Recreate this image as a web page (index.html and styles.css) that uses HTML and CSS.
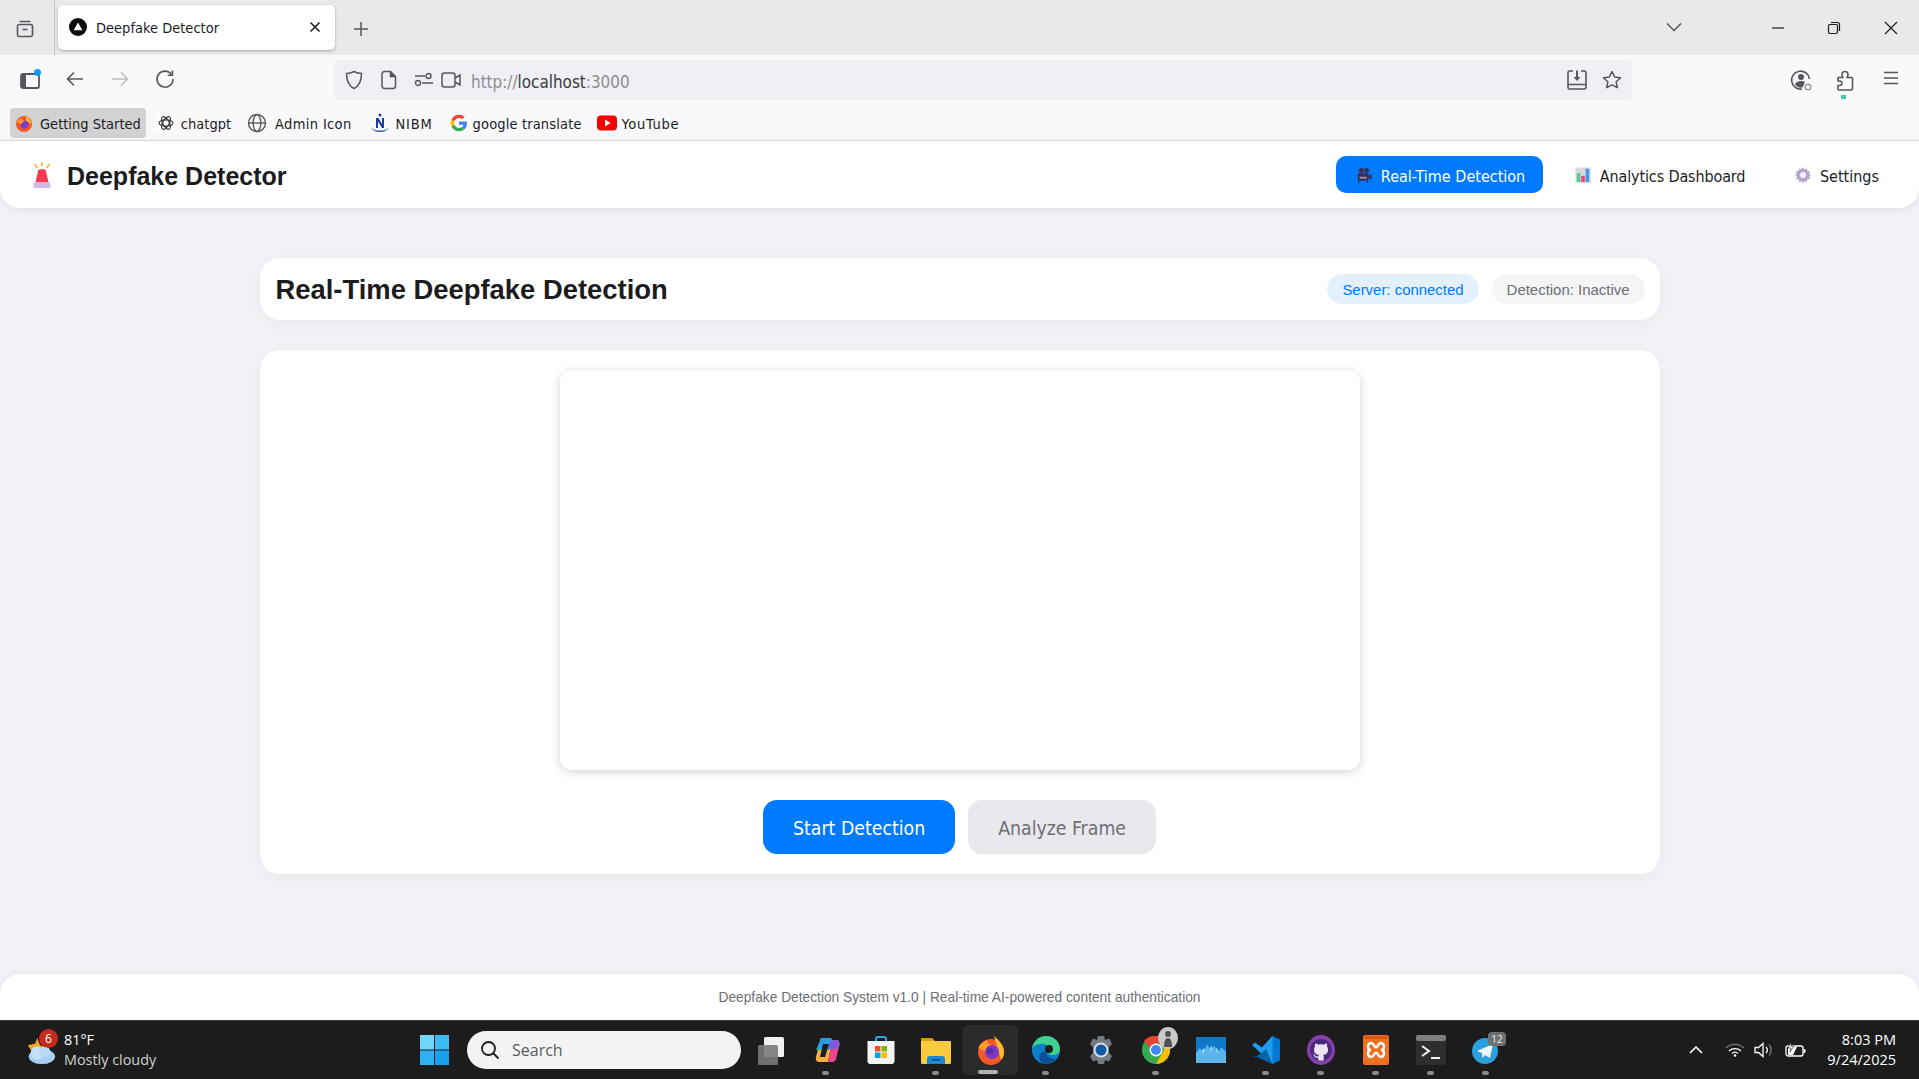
FILE: index.html
```html
<!DOCTYPE html>
<html lang="en">
<head>
<meta charset="utf-8">
<title>Deepfake Detector</title>
<link rel="stylesheet" href="styles.css">
</head>
<body>
<div class="tabstrip">
  <div class="tab-side">
    <svg class="ic20" viewBox="0 0 20 20" fill="none" stroke="#56565c" stroke-width="1.6"><rect x="2.5" y="5.5" width="15" height="12" rx="2"/><path d="M4.5 2.5h11M7.5 10.5h5"/></svg>
  </div>
  <div class="tab">
    <svg class="ic18" viewBox="0 0 18 18"><circle cx="9" cy="9" r="9" fill="#0b0b0d"/><path d="M9 4.6l4.4 7.6H4.6z" fill="#fff"/></svg>
    <span class="tab-title">Deepfake Detector</span>
    <svg class="tab-close" viewBox="0 0 12 12" stroke="#1c1c20" stroke-width="1.5"><path d="M1.5 1.5l9 9M10.500 1.500l-9 9"/></svg>
  </div>
  <div class="tab-new">
    <svg class="ic18" viewBox="0 0 18 18" stroke="#56565c" stroke-width="1.5"><path d="M9 2v14M2 9h14"/></svg>
  </div>
  <div class="tab-fill"></div>
  <svg class="tab-all" viewBox="0 0 16 10" fill="none" stroke="#56565c" stroke-width="1.5"><path d="M1 1.500l7 7 7-7"/></svg>
  <div class="win-ctrl">
    <svg class="ic14" viewBox="0 0 14 14" stroke="#1c1c20" stroke-width="1.200"><path d="M1 7h12"/></svg>
  </div>
  <div class="win-ctrl">
    <svg class="ic14" viewBox="0 0 14 14" fill="none" stroke="#1c1c20" stroke-width="1.200"><rect x="1.500" y="3.500" width="9" height="9" rx="1.500"/><path d="M4 1.500h6.500a2 2 0 0 1 2 2V10"/></svg>
  </div>
  <div class="win-ctrl">
    <svg class="ic14" viewBox="0 0 14 14" stroke="#1c1c20" stroke-width="1.200"><path d="M1 1l12 12M13 1L1 13"/></svg>
  </div>
</div>

<div class="toolbar">
  <div class="nav-row">
    <div class="tb-left">
      <div class="tb-btn">
        <svg class="ic22" viewBox="0 0 22 22"><rect x="2" y="5" width="18" height="14" rx="2" fill="none" stroke="#56565c" stroke-width="1.800"/><rect x="2" y="5" width="5" height="14" rx="2" fill="#56565c"/><circle cx="18.500" cy="3.500" r="3.500" fill="#0a9dff"/></svg>
      </div>
      <div class="tb-btn">
        <svg class="ic20" viewBox="0 0 20 20" fill="none" stroke="#56565c" stroke-width="1.600"><path d="M18 10H2.500M9 3.500L2.500 10 9 16.500"/></svg>
      </div>
      <div class="tb-btn">
        <svg class="ic20" viewBox="0 0 20 20" fill="none" stroke="#bdbdc2" stroke-width="1.600"><path d="M2 10h15.500M11 3.500l6.500 6.500-6.500 6.500"/></svg>
      </div>
      <div class="tb-btn">
        <svg class="ic20" viewBox="0 0 20 20" fill="none" stroke="#56565c" stroke-width="1.600"><path d="M16.500 5.500A8 8 0 1 0 18 10"/><path d="M17.500 1.500v4.800h-4.800" stroke-width="1.600"/></svg>
      </div>
    </div>
    <div class="urlbar">
      <svg class="ic20" viewBox="0 0 20 20" fill="none" stroke="#56565c" stroke-width="1.500"><path d="M10 1.500c2.500 1.500 5 2 7.500 2 0 7-1.500 12-7.500 15-6-3-7.500-8-7.500-15 2.500 0 5-.5 7.500-2z"/></svg>
      <svg class="url-page" viewBox="0 0 16 20" fill="none" stroke="#56565c" stroke-width="1.500"><path d="M3.500 1.500h6l5 5v9.500a2.500 2.500 0 0 1-2.500 2.500H3.500A2.500 2.500 0 0 1 1 16V4a2.500 2.500 0 0 1 2.500-2.500z"/><path d="M9.500 1.500v5h5" fill="#56565c"/></svg>
      <svg class="url-perm" viewBox="0 0 20 16" fill="none" stroke="#56565c" stroke-width="1.400"><circle cx="14.500" cy="4" r="2.500"/><circle cx="4" cy="11" r="2.500"/><path d="M1 4h10M8 11h11"/></svg>
      <svg class="url-cam" viewBox="0 0 20 18" fill="none" stroke="#56565c" stroke-width="1.500"><rect x="1" y="2" width="13" height="14" rx="2.500"/><path d="M14 7l5-3v10l-5-3"/></svg>
      <span class="url-text">http://<b>localhost</b>:3000</span>
      <span class="url-fill"></span>
      <svg class="ic22" viewBox="0 0 22 22" fill="none" stroke="#56565c" stroke-width="1.600"><path d="M7 2H3.500A1.500 1.500 0 0 0 2 3.500v15A1.500 1.500 0 0 0 3.500 20h15a1.500 1.500 0 0 0 1.500-1.500v-15A1.500 1.500 0 0 0 18.500 2H15M2 15.500h18"/><path d="M11 1.500v9" stroke-width="2"/><path d="M7.500 8l3.500 4 3.500-4z" fill="#56565c" stroke="none"/></svg>
      <svg class="url-star" viewBox="0 0 20 20" fill="none" stroke="#56565c" stroke-width="1.500" stroke-linejoin="round"><path d="M10 1.500l2.600 5.400 5.900.8-4.300 4.100 1.100 5.900L10 14.900l-5.300 2.800 1.100-5.900L1.500 7.700l5.900-.8z"/></svg>
    </div>
    <div class="tb-right">
      <div class="tb-btn-r">
        <svg class="ic22" viewBox="0 0 22 22" fill="none" stroke="#56565c" stroke-width="1.600"><path d="M19.500 10A9 9 0 1 0 12 20"/><circle cx="11" cy="8" r="3" fill="#56565c" stroke="none"/><path d="M5 15.500c1-2.800 3.500-3.500 6-3.500 1.500 0 3 .3 4 1l-2.500 5.500c-3 .5-6-.5-7.500-3z" fill="#56565c" stroke="none"/><circle cx="18" cy="18" r="2.800" stroke="#9a9aa0" stroke-width="1.400"/></svg>
      </div>
      <div class="tb-btn-r ext">
        <svg class="ic22" viewBox="0 0 22 22" fill="none" stroke="#56565c" stroke-width="1.600" stroke-linejoin="round"><path d="M3 8.500h5c-.5-1-1-1.500-1-3a3 3 0 0 1 6 0c0 1.500-.5 2-1 3h4.500a1 1 0 0 1 1 1V20a1 1 0 0 1-1 1H4a1 1 0 0 1-1-1v-3.500h1.500c1.500 0 2.500-.8 2.500-2.200S6 12 4.500 12H3z"/></svg>
        <span class="ext-dot"></span>
      </div>
      <div class="tb-btn-r">
        <svg class="ic18" viewBox="0 0 18 18" stroke="#56565c" stroke-width="1.500"><path d="M2 3.500h14M2 9h14M2 14.500h14"/></svg>
      </div>
    </div>
  </div>
  <div class="bm-row">
    <div class="bm bm-active">
      <svg class="ic18" viewBox="0 0 18 18"><circle cx="9" cy="10" r="8" fill="#f2562a"/><path d="M11 1c3 2.500 5 5.500 5 9l-5-3z" fill="#ffb92e"/><circle cx="9.500" cy="10.500" r="4" fill="#7a3bc8"/><path d="M2 8c1-2 2-3 4-4 0 2 2 2.500 4 3-2 .5-3 1.500-3 3-2 0-4-1-5-2z" fill="#ff9a2e"/></svg>
      <span>Getting Started</span>
    </div>
    <div class="bm">
      <svg class="ic18" viewBox="0 0 18 18"><rect width="18" height="18" rx="3" fill="#fff"/><g fill="none" stroke="#3a3a3e" stroke-width="1.200"><ellipse cx="9" cy="9" rx="7" ry="3.200"/><ellipse cx="9" cy="9" rx="7" ry="3.200" transform="rotate(60 9 9)"/><ellipse cx="9" cy="9" rx="7" ry="3.200" transform="rotate(120 9 9)"/></g></svg>
      <span>chatgpt</span>
    </div>
    <div class="bm bm-admin">
      <svg class="ic20" viewBox="0 0 20 20" fill="none" stroke="#56565c" stroke-width="1.400"><circle cx="10" cy="10" r="8.500"/><ellipse cx="10" cy="10" rx="3.800" ry="8.500"/><path d="M1.500 10h17"/></svg>
      <span>Admin Icon</span>
    </div>
    <div class="bm bm-nibm">
      <svg class="ic20" viewBox="0 0 20 20"><path d="M6 5h2.500l3.500 6V5h2v10h-2L8 8.500V15H6z" fill="#1c3f9e"/><circle cx="10" cy="2" r="1.500" fill="#1c3f9e"/><path d="M1 14c2 4 5 5 9 5s7-1 9-5c-2 3-5 3.500-9 3.500S3 17 1 14z" fill="#2f56b5"/></svg>
      <span>NIBM</span>
    </div>
    <div class="bm bm-translate">
      <svg class="ic18" viewBox="0 0 18 18"><path d="M17 9.200c0-.6 0-1.100-.1-1.600H9v3.100h4.500c-.2 1-.8 1.900-1.700 2.500l2.700 2.100c1.600-1.500 2.500-3.600 2.500-6.100z" fill="#4285f4"/><path d="M9 17.300c2.200 0 4.100-.7 5.500-2l-2.700-2.100c-.7.500-1.700.8-2.800.8-2.100 0-3.900-1.400-4.600-3.400L1.600 12.800C3 15.500 5.800 17.300 9 17.300z" fill="#34a853"/><path d="M4.400 10.600c-.4-1.100-.4-2.200 0-3.300L1.600 5.200C.4 7.500.4 10.400 1.600 12.800z" fill="#fbbc05"/><path d="M9 4c1.200 0 2.300.4 3.100 1.200l2.400-2.400C13.100 1.400 11.200.7 9 .7 5.800.7 3 2.500 1.600 5.200l2.800 2.100C5.100 5.400 6.900 4 9 4z" fill="#ea4335"/></svg>
      <span>google translate</span>
    </div>
    <div class="bm bm-yt">
      <svg class="ic20" viewBox="0 0 20 20"><rect y="2.500" width="20" height="15" rx="4" fill="#f00"/><path d="M8 6.500l5.500 3.500L8 13.500z" fill="#fff"/></svg>
      <span>YouTube</span>
    </div>
  </div>
</div>

<header class="app-header">
  <div class="brand">
    <svg class="brand-ic" viewBox="0 0 24 30"><path d="M12 1v5M4 3l3 4.500M20 3l-3 4.500" stroke="#f6b93b" stroke-width="1.800" fill="none"/><path d="M8 10c.5-1.500 7.500-1.500 8 0l3 13H5z" fill="#f5394f"/><rect x="3" y="23" width="18" height="6" rx="1" fill="#cdb8e8"/></svg>
    <h1 class="brand-name">Deepfake Detector</h1>
  </div>
  <nav class="app-nav">
    <a class="nav-item nav-active">
      <svg class="nav-ic" viewBox="0 0 18 18"><circle cx="6" cy="4" r="2.800" fill="#3d2d4f"/><circle cx="12" cy="4" r="2.800" fill="#3d2d4f"/><rect x="2" y="7" width="12" height="8.500" rx="1" fill="#3d2d4f"/><path d="M14 9.500l3.500-1.500v6L14 12.500z" fill="#3d2d4f"/><rect x="4" y="11" width="8" height="2" fill="#a79bb5"/><path d="M4 15.500L2.500 18M12 15.500l1.500 2.500" stroke="#3d2d4f" stroke-width="1.200"/></svg>
      <span>Real-Time Detection</span>
    </a>
    <a class="nav-item nav-analytics">
      <svg class="nav-ic" viewBox="0 0 18 18"><rect x=".5" y=".5" width="17" height="17" rx="1" fill="#d9d6de"/><rect x="2" y="7" width="4" height="10" fill="#4fd08a"/><rect x="7" y="10" width="4" height="7" fill="#f0417a"/><rect x="12" y="2" width="4" height="15" fill="#3d9be9"/></svg>
      <span>Analytics Dashboard</span>
    </a>
    <a class="nav-item">
      <svg class="nav-ic" viewBox="0 0 18 18"><path d="M9 0l1.600 2.600 2.900-1 .4 3 3 .4-1 2.900L18 9l-2.100 1.600 1 2.900-3 .4-.4 3-2.900-1L9 18l-1.600-2.100-2.900 1-.4-3-3-.4 1-2.900L0 9l2.100-1.100-1-2.900 3-.4.4-3 2.900 1z" fill="#b3a3cd"/><circle cx="9" cy="9" r="3.500" fill="#f3eff8"/></svg>
      <span>Settings</span>
    </a>
  </nav>
</header>

<main class="main">
  <section class="title-card">
    <h2 class="title">Real-Time Deepfake Detection</h2>
    <div class="chips">
      <span class="chip chip-blue">Server: connected</span>
      <span class="chip chip-grey">Detection: Inactive</span>
    </div>
  </section>
  <section class="stage">
    <div class="video"></div>
    <div class="actions">
      <button class="btn btn-primary">Start Detection</button>
      <button class="btn btn-muted">Analyze Frame</button>
    </div>
  </section>
</main>

<footer class="footer">Deepfake Detection System v1.0 | Real-time AI-powered content authentication</footer>

<div class="taskbar">
  <div class="weather">
    <div class="weather-ic">
      <svg class="weather-svg" viewBox="0 0 34 34"><path d="M14 4l3 8 7 3-7 3H8l-4-6 8-2z" fill="#f5a623"/><ellipse cx="19" cy="24" rx="14" ry="8" fill="#a8d0f2"/><circle cx="14" cy="20" r="7" fill="#c5e2f8"/><circle cx="22" cy="19" r="6" fill="#b8daf5"/></svg>
      <span class="badge-red">6</span>
    </div>
    <div class="weather-text">
      <span class="temp">81°F</span>
      <span class="cond">Mostly cloudy</span>
    </div>
  </div>
  <div class="start">
    <svg class="start-svg" viewBox="0 0 29 30"><rect width="14" height="14.500" fill="#6fd6fb"/><rect x="15" width="14" height="14.500" fill="#3cbcf5"/><rect y="15.500" width="14" height="14.500" fill="#2eb0f3"/><rect x="15" y="15.500" width="14" height="14.500" fill="#16a0ee"/></svg>
  </div>
  <div class="search">
    <svg class="ic20" viewBox="0 0 20 20" fill="none" stroke="#1a1a1a" stroke-width="1.800"><circle cx="8.500" cy="8.500" r="6.500"/><path d="M13 13l5.500 5.500"/></svg>
    <span>Search</span>
  </div>
  <div class="apps">
    <div class="app">
      <svg class="app-ic" viewBox="0 0 30 30"><rect x="8" y="2" width="20" height="20" rx="1.500" fill="#f1f1f1"/><rect x="2" y="10" width="20" height="20" rx="1.500" fill="#7a7a7a" opacity=".9"/></svg>
    </div>
    <div class="app dotted">
      <svg class="app-ic" viewBox="0 0 30 30"><path d="M10 3h8c2 0 3 1 3 3L17 27H9c-3 0-5-2-4-5z" fill="#f4b13d"/><path d="M10 3h8c2 0 3 1 3 3l-3 9H5z" fill="#2a9fe0"/><path d="M21 6l5 0c3 0 3 3 2 6l-3 12c-1 3-3 3-5 3h-3z" fill="#e9488a"/><path d="M20 5h6c2 0 3 2 2 5l-2 4H17z" fill="#7c5ce0"/><path d="M12 9h6l-4 13H9z" fill="#1d1d1d"/></svg>
    </div>
    <div class="app">
      <svg class="app-ic" viewBox="0 0 30 30"><path d="M10 7V4a2 2 0 0 1 2-2h6a2 2 0 0 1 2 2v3" fill="none" stroke="#29a8e8" stroke-width="2"/><path d="M1.500 6h27v20a3 3 0 0 1-3 3h-21a3 3 0 0 1-3-3z" fill="#f4f4f4"/><rect x="9" y="11" width="5.500" height="5.500" fill="#f25022"/><rect x="15.500" y="11" width="5.500" height="5.500" fill="#7fba00"/><rect x="9" y="17.500" width="5.500" height="5.500" fill="#00a4ef"/><rect x="15.500" y="17.500" width="5.500" height="5.500" fill="#ffb900"/></svg>
    </div>
    <div class="app dotted">
      <svg class="app-ic" viewBox="0 0 30 30"><path d="M0 3h11l3 3h0v4H0z" fill="#d99a12"/><rect y="6" width="30" height="23" rx="1" fill="#fbcb3f"/><path d="M6 24a3 3 0 0 1 3-3h12a3 3 0 0 1 3 3v5H6z" fill="#1d87d4"/><rect x="11" y="24" width="8" height="1.500" fill="#0e4a80"/></svg>
    </div>
    <div class="app app-on">
      <svg class="app-ic" viewBox="0 0 30 30"><circle cx="15" cy="17" r="13" fill="#f2562a"/><path d="M18 1c6 5 10 10 10 16 0 3-1 6-3 8z" fill="#ffb92e"/><path d="M2.500 13C4 9 7 7 11 5c0 4 4 5 9 6-4 1-6 3-6 5-5 1-8-1-11.500-3z" fill="#ff9a2e"/><circle cx="16" cy="17" r="7" fill="#7a3bc8"/><circle cx="14" cy="16" r="3.500" fill="#5a2ea8"/></svg>
    </div>
    <div class="app dotted">
      <svg class="app-ic" viewBox="0 0 30 30"><circle cx="15" cy="15" r="14" fill="#0d7fc9"/><path d="M1 15C1 7 8 1 15 1c8 0 14 6 14 13 0 4-3 6-7 6-3 0-5-1-5-3 0-1 1-2 1-3 0-3-3-5-7-5-5 0-10 2-10 6z" fill="#3fcf8e"/><path d="M15 29C9 29 7 23 9 19c1-2 4-3 6-2 0 3 3 7 9 7 1 0 1 1 0 1-2 2-5 4-9 4z" fill="#0c4f96"/><circle cx="18" cy="14" r="4" fill="#1c1c1c"/></svg>
    </div>
    <div class="app">
      <svg class="app-ic" viewBox="0 0 30 30"><path d="M12 1h6l1 4 4-1.500 3 5.500-3 3v6l3 3-3 5.500L19 25l-1 4h-6l-1-4-4 1.500L4 21l3-3v-6L4 9l3-5.500L11 5z" fill="#737a82"/><circle cx="15" cy="15" r="7.500" fill="#d8dde2"/><circle cx="15" cy="15" r="5.500" fill="#0f5ba7"/></svg>
    </div>
    <div class="app dotted">
      <svg class="app-ic" viewBox="0 0 30 30"><circle cx="15" cy="15" r="14" fill="#34a853"/><path d="M15 1a14 14 0 0 1 12.500 7.500H15a7 7 0 0 0-6.500 4L3 5.800A14 14 0 0 1 15 1z" fill="#ea4335"/><path d="M27.500 8.500A14 14 0 0 1 15 29l6-10.500a7 7 0 0 0 0-10z" fill="#fbbc05"/><circle cx="15" cy="15" r="6.500" fill="#fff"/><circle cx="15" cy="15" r="5" fill="#4285f4"/></svg>
      <svg class="chrome-avatar" viewBox="0 0 20 22"><ellipse cx="10" cy="11" rx="10" ry="11" fill="#c9c9c9"/><circle cx="10" cy="7" r="3" fill="#55514e"/><path d="M6 20c0-5 1-9 4-9s4 4 4 9z" fill="#55514e"/></svg>
    </div>
    <div class="app">
      <svg class="app-ic" viewBox="0 0 30 30"><rect y="2" width="30" height="26" rx="1" fill="#96d4f8"/><path d="M0 2h30v14l-5 5-4-8-3 2-3-4-4 8-3-6-4 4-4 2z" fill="#0f78c8"/><path d="M0 18l4-5 3 6 4-10 4 7 3-6 4 9 3-7 5 5v11H0z" fill="#5cb6ec"/></svg>
    </div>
    <div class="app dotted">
      <svg class="app-ic" viewBox="0 0 30 30"><path d="M21.500 1L29 4.500v21L21.500 29 8 16z" fill="#0078d4"/><path d="M21.500 1v28L1 10l3-2.500 7 5z" fill="#1f9cf0"/><path d="M21.500 29L1 20l3 2.500 7-5 4-3.500z" fill="#0065a9"/></svg>
    </div>
    <div class="app dotted">
      <svg class="app-ic" viewBox="0 0 30 30"><ellipse cx="15" cy="15" rx="14" ry="15" fill="#8a3fb0"/><circle cx="15" cy="15" r="10.500" fill="#efe4f5"/><path transform="translate(4 4) scale(1.375)" fill="#4a2a78" d="M8 0C3.580 0 0 3.580 0 8c0 3.540 2.290 6.530 5.470 7.590.4.070.55-.17.55-.38 0-.19-.01-.82-.01-1.490-2.010.37-2.530-.49-2.690-.94-.09-.23-.48-.94-.82-1.130-.28-.15-.68-.52-.01-.53.63-.01 1.080.58 1.230.82.72 1.210 1.870.87 2.330.66.070-.52.28-.87.51-1.070-1.780-.2-3.640-.89-3.640-3.950 0-.87.31-1.590.82-2.150-.08-.2-.36-1.020.08-2.120 0 0 .67-.21 2.200.82.64-.18 1.320-.27 2-.27s1.360.09 2 .27c1.530-1.040 2.200-.82 2.200-.82.44 1.100.16 1.920.08 2.120.51.56.82 1.270.82 2.150 0 3.070-1.870 3.750-3.650 3.950.29.25.54.73.54 1.480 0 1.070-.01 1.930-.01 2.200 0 .21.15.46.55.38A8.013 8.013 0 0 0 16 8c0-4.420-3.580-8-8-8z"/></svg>
    </div>
    <div class="app dotted">
      <svg class="app-ic" viewBox="0 0 30 30"><rect x="2" width="26" height="30" rx="2" fill="#f0701f"/><rect x="3" y="1" width="24" height="3" fill="#d35a10"/><path d="M10 8c-2 0-3 2-3 4s1 3 3 3c-2 0-3 1-3 3s1 4 3 4c2 0 3-2 4-4h2c1 2 2 4 4 4 2 0 3-2 3-4s-1-3-3-3c2 0 3-1 3-3s-1-4-3-4c-2 0-3 2-4 4h-2C13 10 12 8 10 8z" fill="none" stroke="#fff" stroke-width="2.400"/></svg>
    </div>
    <div class="app dotted">
      <svg class="app-ic" viewBox="0 0 30 30"><rect width="30" height="30" rx="2" fill="#2e2e2e"/><rect width="30" height="6" rx="2" fill="#7f7f7f"/><path d="M6 11l7 5-7 5" fill="none" stroke="#f2f2f2" stroke-width="2"/><path d="M15 23h9" stroke="#f2f2f2" stroke-width="2"/></svg>
    </div>
    <div class="app dotted">
      <svg class="app-ic" viewBox="0 0 30 30"><circle cx="14" cy="16" r="13" fill="#2ba0dc"/><path d="M6 16l16-7-3 14-5-3-3 3v-5z" fill="#eef7fd"/></svg>
      <span class="tg-badge">12</span>
    </div>
  </div>
  <div class="tray">
    <svg class="tray-chev" viewBox="0 0 14 8" fill="none" stroke="#fff" stroke-width="1.600"><path d="M1 7l6-6 6 6"/></svg>
    <svg class="tray-wifi" viewBox="0 0 20 14" fill="none" stroke="#fff" stroke-width="1.300"><path d="M1 5a13 13 0 0 1 18 0" stroke="#7b7b7b"/><path d="M4 8a9 9 0 0 1 12 0"/><path d="M7 10.500a4.500 4.500 0 0 1 6 0"/><circle cx="10" cy="12.500" r="1.200" fill="#fff" stroke="none"/></svg>
    <svg class="tray-vol" viewBox="0 0 20 18" fill="none" stroke="#fff" stroke-width="1.300"><path d="M1 6.500h3.500L9 2.500v13l-4.500-4H1z"/><path d="M12 6a4 4 0 0 1 0 6"/><path d="M15 3.500a8 8 0 0 1 0 11" stroke="#7b7b7b"/></svg>
    <svg class="tray-bat" viewBox="0 0 22 16" fill="none" stroke="#fff" stroke-width="1.300"><rect x="1" y="4" width="17" height="10" rx="2"/><rect x="18.500" y="7" width="2" height="4" rx="1" fill="#fff" stroke="none"/><path d="M3 5h9l-4 8H3z" fill="#fff" stroke="none"/><path d="M6 0L3 6h3l-1 4 4-6H6z" fill="#fff" stroke="#1c1c1c" stroke-width=".6"/></svg>
    <div class="clock"><span>8:03 PM</span><span>9/24/2025</span></div>
  </div>
</div>
</body>
</html>
```
FILE: styles.css
```css
* { box-sizing: border-box; }
html, body { margin: 0; height: 100%; }
body {
  display: flex;
  flex-direction: column;
  height: 1079px;
  overflow: hidden;
  background: #f2f2f7;
  font-family: "DejaVu Sans Condensed", "DejaVu Sans", sans-serif;
  color: #1c1c1e;
}
svg { display: block; flex: none; }
.ic14 { width: 14px; height: 14px; }
.ic18 { width: 18px; height: 18px; }
.ic20 { width: 20px; height: 20px; }
.ic22 { width: 22px; height: 22px; }

/* tab strip */
.tabstrip { height: 55px; flex: none; background: #e9e9ec; display: flex; align-items: center; }
.tab-side { width: 55px; height: 55px; display: flex; align-items: center; justify-content: center; border-right: 1px solid #c4c4c8; padding: 2px 5px 0 0; }
.tab {
  width: 277px; height: 45px; margin-left: 3px;
  background: #fff; border-radius: 5px; box-shadow: 0 1px 3px rgba(0,0,0,.3);
  display: flex; align-items: center; padding: 0 14px 0 11px; font-size: 14.5px; margin-top: -1px;
}
.tab-title { margin-left: 9px; flex: 1; padding-top: 2px; }
.tab-close { width: 12px; height: 12px; }
.tab-new { width: 51px; display: flex; justify-content: center; padding-top: 2px; }
.tab-fill { flex: 1; }
.tab-all { width: 16px; height: 10px; margin-right: 68px; margin-top: -2px; }
.win-ctrl { width: 56.500px; display: flex; justify-content: center; }

/* toolbar */
.toolbar { height: 86px; flex: none; background: #f9f9fb; border-bottom: 1px solid #dcdcde; }
.nav-row { height: 50px; display: flex; align-items: center; }
.tb-left { display: flex; width: 334px; padding-left: 7px; }
.tb-btn { width: 45px; display: flex; justify-content: center; }
.urlbar {
  width: 1298px; height: 40px;
  background: #f0f0f4; border-radius: 4px;
  display: flex; align-items: center; padding: 0 10px 0 10px;
}
.url-page { width: 16px; height: 20px; margin-left: 17px; }
.url-perm { width: 20px; height: 16px; margin-left: 17px; }
.url-cam { width: 20px; height: 18px; margin-left: 7px; }
.url-text { margin-left: 10px; padding-top: 4px; font-size: 16.900px; color: #8c8c92; white-space: nowrap; }
.url-text b { font-weight: 400; color: #3a3a3e; }
.url-fill { flex: 1; }
.url-star { width: 20px; height: 20px; margin-left: 14px; }
.tb-right { display: flex; flex: 1; justify-content: flex-end; padding-right: 6px; }
.tb-btn-r { width: 45px; display: flex; justify-content: center; position: relative; }
.ext-dot { position: absolute; left: 18px; top: 26px; width: 5px; height: 4px; background: #3ecf9e; }

.bm-row { height: 35px; display: flex; align-items: center; padding-left: 10px; font-size: 14.500px; }
.bm { display: flex; align-items: center; gap: 6px; height: 30px; padding: 0 5px; margin-right: 7px; white-space: nowrap; border-radius: 4px; }
.bm span { padding-top: 2px; }
.bm-active { background: #d2d2d4; gap: 7px; margin-right: 6px; }
.bm-admin { margin-left: -1px; gap: 8px; letter-spacing: .35px; }
.bm-nibm { margin-left: 1px; gap: 6px; letter-spacing: .8px; }
.bm-translate { gap: 5px; letter-spacing: .15px; }
.bm-yt { margin-left: -2px; gap: 5px; letter-spacing: .7px; }

/* app header */
.app-header {
  height: 67px; flex: none; background: #fff;
  border-radius: 0 0 20px 20px;
  box-shadow: 0 2px 10px rgba(0,0,0,.08);
  display: flex; align-items: center; justify-content: space-between;
  padding: 0 22px 0 29px;
  position: relative;
}
.brand { display: flex; align-items: center; gap: 12px; }
.brand-ic { width: 26px; height: 28px; }
.brand-name { margin: 0; padding-top: 3px; font: 700 25px "Liberation Sans", Arial, sans-serif; }
.app-nav { display: flex; gap: 11.600px; }
.nav-item {
  height: 37px; display: flex; align-items: center; gap: 9px;
  padding: 0 18px 0 20px; border-radius: 10px; font-size: 16px; white-space: nowrap;
}
.nav-item span { padding-top: 4px; }
.nav-ic { width: 16px; height: 16px; }
.nav-active { background: #007aff; color: #fff; }
.nav-analytics span { letter-spacing: -.13px; }

/* main */
.main { flex: 1; width: 1400px; margin: 0 auto; padding-top: 50px; display: flex; flex-direction: column; gap: 30px; }
.title-card {
  height: 62px; background: #fff; border-radius: 20px;
  box-shadow: 0 4px 20px rgba(0,0,0,.05);
  display: flex; align-items: center; justify-content: space-between;
  padding: 0 15px 0 16px;
}
.title { margin: 0; padding-top: 2px; font: 700 27.400px "Liberation Sans", Arial, sans-serif; color: #1c1c1e; }
.chips { display: flex; gap: 13px; }
.chip { height: 30px; padding: 1px 15px 0; border-radius: 15px; font: 14.950px/30px "Liberation Sans", Arial, sans-serif; }
.chip-blue { background: #e5f0ff; color: #007aff; }
.chip-grey { background: #f5f5f7; color: #6e6e73; }
.stage {
  height: 524px; background: #fff; border-radius: 20px;
  box-shadow: 0 4px 20px rgba(0,0,0,.05);
  display: flex; flex-direction: column; align-items: center;
  padding-top: 20px;
}
.video { width: 800px; height: 400px; background: #fff; border-radius: 12px; box-shadow: 0 2px 10px rgba(0,0,0,.18); }
.actions { display: flex; gap: 13px; margin-top: 30px; }
.btn {
  height: 54px; border: 0; border-radius: 14px; padding: 2px 30px 0;
  font-family: "DejaVu Sans Condensed", "DejaVu Sans", sans-serif; font-size: 19.300px;
}
.btn-primary { background: #007aff; color: #fff; }
.btn-muted { background: #e8e8ed; color: #6e6e73; }

/* footer */
.footer {
  height: 46px; flex: none; background: #fff;
  border-radius: 20px 20px 0 0;
  box-shadow: 0 -2px 10px rgba(0,0,0,.06);
  display: flex; align-items: center; justify-content: center;
  font: 13.750px "Liberation Sans", Arial, sans-serif; color: #6e6e73;
  position: relative;
}

/* taskbar */
.taskbar {
  height: 59px; flex: none; background: #1c1c1c; border-top: 1px solid #3a3a3a;
  display: flex; align-items: center; color: #fff;
  font-family: "Open Sans", sans-serif;
  position: relative;
}
.weather { width: 420px; display: flex; align-items: center; padding-left: 24px; gap: 8px; }
.weather-ic { width: 32px; height: 34px; position: relative; }
.weather-svg { width: 32px; height: 34px; }
.badge-red { position: absolute; left: 15px; top: -4px; width: 19px; height: 19px; border-radius: 50%; background: #c42b1c; color: #fff; font-size: 12px; line-height: 19px; text-align: center; }
.weather-text { display: flex; flex-direction: column; font-size: 14.400px; line-height: 20px; }
.cond { color: #d0d0d0; }
.start { width: 47px; }
.start-svg { width: 29px; height: 30px; }
.search {
  width: 274px; height: 38px; border-radius: 19px; background: #f3f3f3; color: #5a5a5a;
  display: flex; align-items: center; gap: 12px; padding-left: 13px; font-size: 16px;
}
.apps { display: flex; margin-left: 2px; }
.app { width: 55px; height: 50px; display: flex; align-items: center; justify-content: center; position: relative; border-radius: 5px; }
.app-ic { width: 30px; height: 30px; }
.dotted::after { content: ""; position: absolute; left: 24px; bottom: 0; width: 7px; height: 4px; border-radius: 2px; background: #8a8a8a; }
.app-on { background: #2b2b2b; }
.app-on::after { content: ""; position: absolute; left: 15px; bottom: 1px; width: 20px; height: 4px; border-radius: 2px; background: #a8b4b8; }
.chrome-avatar { position: absolute; left: 30px; top: 2px; width: 20px; height: 22px; }
.tg-badge { position: absolute; left: 30px; top: 7px; width: 18px; height: 14px; border-radius: 4px; background: #707070; color: #eee; font-size: 10px; line-height: 14px; text-align: center; }
.tray { flex: 1; display: flex; align-items: center; padding-right: 23px; }
.tray-chev { width: 14px; height: 8px; margin-left: 176px; }
.tray-wifi { width: 20px; height: 14px; margin-left: 22px; }
.tray-vol { width: 20px; height: 18px; margin-left: 9px; }
.tray-bat { width: 22px; height: 16px; margin-left: 11px; }
.clock { flex: 1; display: flex; flex-direction: column; align-items: flex-end; font-size: 14.500px; line-height: 20px; }
```
